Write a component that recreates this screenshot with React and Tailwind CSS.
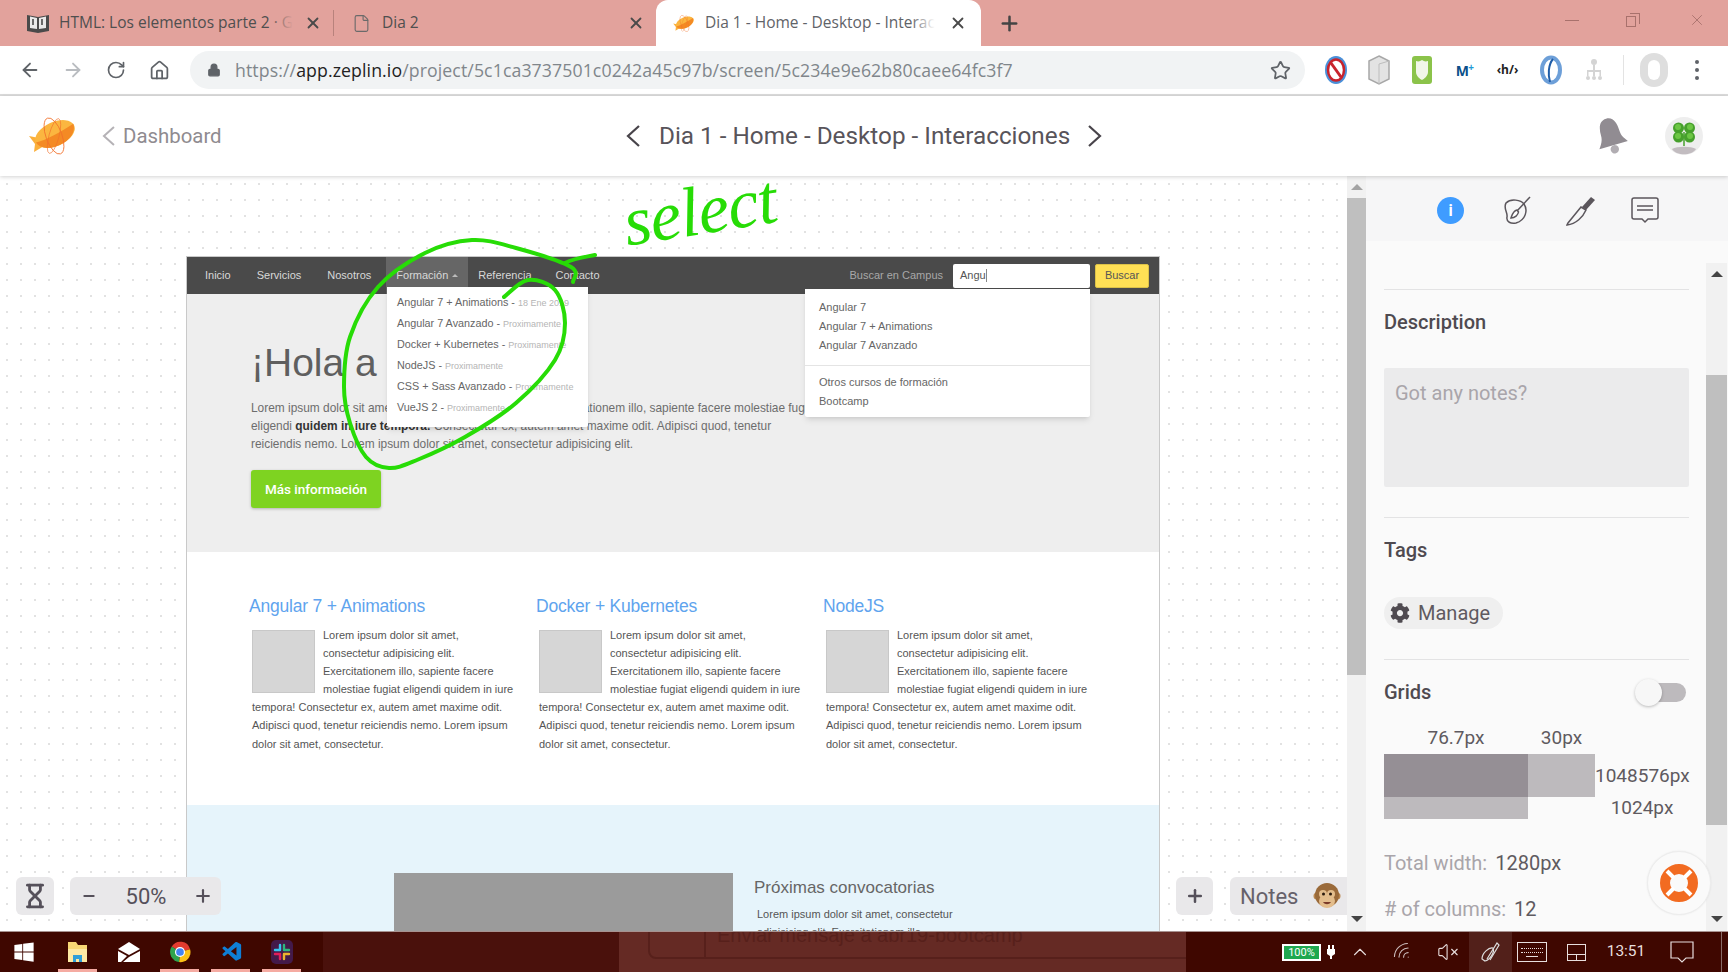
// App.jsx - Zeplin screen inside Chrome on Windows
import { ArrowLeft, ArrowRight, RotateCw, House, Lock, Star, X, Plus, Minus, File, Hourglass, ChevronUp, Wifi, VolumeX } from 'lucide-react'
import { FaCog, FaWindows } from 'react-icons/fa'
import { VscVscode } from 'react-icons/vsc'

const URL_HOST = 'app.zeplin.io'
const URL_PATH = '/project/5c1ca3737501c0242a45c97b/screen/5c234e9e62b80caee64fc3f7'

// smooth line through the points of the hand drawn circle
function smooth(points) {
    let d = `M${points[0][0]} ${points[0][1]}`
    for (let i = 0; i < points.length - 1; i++) {
        const p0 = points[i - 1] || points[i]
        const p1 = points[i]
        const p2 = points[i + 1]
        const p3 = points[i + 2] || p2
        d += ` C${p1[0] + (p2[0] - p0[0]) / 6} ${p1[1] + (p2[1] - p0[1]) / 6} ${p2[0] - (p3[0] - p1[0]) / 6} ${p2[1] - (p3[1] - p1[1]) / 6} ${p2[0]} ${p2[1]}`
    }
    return d
}

const CIRCLE = [[504, 297], [528, 280], [555, 290], [565, 323], [555, 360], [516, 403], [465, 437], [417, 460], [389, 468], [366, 457], [350, 423], [344, 387], [350, 337], [378, 287], [425, 253], [472, 240], [516, 248], [571, 267], [573, 282]]

function Zeppelin({ className }) {
    return (
        <svg className={className} viewBox="0 0 50 38">
            <path d="M12 21 L2 19 L8 27 L7 35 L17 29 Z" fill="#fbb03b" />
            <g transform="rotate(-24 28 17)">
                <ellipse cx="28" cy="17" rx="21" ry="12" fill="#fbb640" />
                <path d="M7 17 C16 19 36 17 49 15 C48 24 38 29 28 29 C16 29 8 24 7 17 Z" fill="#f48a24" />
            </g>
            <ellipse cx="27" cy="19" rx="8" ry="19" fill="none" stroke="#f2702a" strokeWidth="0.8" transform="rotate(-20 27 19)" />
            <ellipse cx="27" cy="19" rx="5" ry="18" fill="none" stroke="#f2702a" strokeWidth="0.6" transform="rotate(15 27 19)" />
        </svg>
    )
}

function BookIcon() {
    return (
        <svg className="w-[22px] h-[20px]" viewBox="0 0 22 20">
            <path d="M0 2 L11 4 L22 2 V18 L11 20 L0 18 Z" fill="#4a4a4a" />
            <path d="M3 3.5 L10 5 V16 L3 15 Z M12 5 L19 3.500 V15 L12 16 Z" fill="#e9e9e9" />
            <path d="M6 6 V12 M15 6 V12" stroke="#4a4a4a" strokeWidth="1.6" />
        </svg>
    )
}

function Chevron({ className, left }) {
    return (
        <svg className={className} viewBox="0 0 14 22" fill="none" stroke="currentColor" strokeWidth="2.200">
            <path d={left ? 'M13 1 L2 11 L13 21' : 'M1 1 L12 11 L1 21'} />
        </svg>
    )
}

function Tab({ children, icon, closeClass, width, active, fade }) {
    return (
        <div className={`relative flex items-center h-full ${width} ${active ? 'bg-white rounded-t-xl' : ''}`}>
            {icon}
            <div className={`relative overflow-hidden whitespace-nowrap flex-1 text-[15.5px] ${active ? 'text-[#5f6368]' : 'text-[#4f4f4f]'}`}>
                {children}
                {fade && <div className={`absolute right-0 top-0 bottom-0 w-6 bg-linear-to-r from-transparent ${active ? 'to-white' : 'to-[#e2a29c]'}`} />}
            </div>
            <X className={`w-[18px] h-[18px] text-[#4a4a4a] ${closeClass}`} strokeWidth={2.4} />
        </div>
    )
}

function TabBar() {
    return (
        <div className="flex items-center h-[46px] bg-[#e2a29c] shrink-0">
            <Tab width="w-[333px]" fade closeClass="ml-[11px] mr-[11px]" icon={<span className="ml-[27px] mr-[10px]"><BookIcon /></span>}>
                HTML: Los elementos parte 2 · GitHub
            </Tab>
            <div className="w-px h-[26px] bg-[#b8827c]" />
            <Tab width="w-[322px]" closeClass="mr-[11px]" icon={<File className="ml-[18px] mr-[11px] w-[19px] h-[23px] text-[#6a6a6a]" strokeWidth={1.4} />}>
                Dia 2
            </Tab>
            <Tab width="w-[325px]" active fade closeClass="mx-[14px]" icon={<span className="ml-[16px] mr-[10px]"><Zeppelin className="w-[23px] h-[17px]" /></span>}>
                Dia 1 - Home - Desktop - Interacciones
            </Tab>
            <Plus className="ml-[17px] w-[23px] h-[23px] text-[#444]" strokeWidth={2.6} />
            <div className="ml-auto flex items-center h-full pb-[6px] text-[#a8716c]">
                <div className="w-[14px] h-px bg-[#a8716c] mr-[47px]" />
                <div className="relative w-[14px] h-[14px] mr-[48px]">
                    <div className="absolute left-0 bottom-0 w-[10px] h-[11px] border border-[#a8716c]" />
                    <div className="absolute right-0 top-0 w-[10px] h-[11px] border-t border-r border-[#a8716c]" />
                </div>
                <X className="w-[18px] h-[18px] mr-[22px]" strokeWidth={1.2} />
            </div>
        </div>
    )
}

function Ext({ children, className = 'w-[43px]' }) {
    return <div className={`flex items-center justify-center h-full ${className}`}>{children}</div>
}

function Toolbar() {
    return (
        <div className="flex items-center h-[50px] border-b-2 border-[#dcdcdc] bg-white shrink-0">
            <div className="flex items-center w-[190px] pl-[19px]">
                <ArrowLeft className="w-[22px] h-[22px] text-[#5f6368] mr-[21px]" strokeWidth={2} />
                <ArrowRight className="w-[22px] h-[22px] text-[#b9bcc0] mr-[22px]" strokeWidth={2} />
                <RotateCw className="w-[20px] h-[20px] text-[#5f6368] mr-[23px]" strokeWidth={2} />
                <House className="w-[21px] h-[21px] text-[#5f6368]" strokeWidth={2} />
            </div>
            <div className="flex items-center w-[1115px] h-[38px] rounded-full bg-[#f1f3f4] pl-[17px] pr-[14px]">
                <Lock className="w-[14px] h-[14px] text-[#5f6368] mr-[14px]" fill="#5f6368" strokeWidth={2} />
                <div className="flex-1 whitespace-nowrap text-[17.7px] text-[#80868b] tracking-[0.1px]">
                    https://<span className="text-[#222]">{URL_HOST}</span>{URL_PATH}
                </div>
                <Star className="w-[21px] h-[21px] text-[#5f6368]" strokeWidth={2} />
            </div>
            <div className="flex items-center h-full ml-[9px]">
                <Ext>
                    <svg className="w-[22px] h-[28px]" viewBox="0 0 22 28">
                        <ellipse cx="11" cy="14" rx="11" ry="14" fill="#4a90d9" />
                        <ellipse cx="11" cy="14" rx="8" ry="10.500" fill="#fff" stroke="#c8232c" strokeWidth="2.500" />
                        <path d="M6 7 L16 21" stroke="#c8232c" strokeWidth="3" />
                    </svg>
                </Ext>
                <Ext>
                    <svg className="w-[22px] h-[30px]" viewBox="0 0 22 30">
                        <path d="M11 1 L21 6 V24 L11 29 L1 24 V6 Z" fill="#e3e3e3" stroke="#a8a8a8" strokeWidth="1.500" />
                        <path d="M11 9 L21 6 M11 9 V29" stroke="#bdbdbd" strokeWidth="1" fill="none" />
                    </svg>
                </Ext>
                <Ext>
                    <svg className="w-[20px] h-[28px]" viewBox="0 0 20 28">
                        <rect width="20" height="28" rx="3" fill="#8bc34a" />
                        <path d="M4 5 C7 6 8 5 10 4 C12 5 13 6 16 5 V16 C16 20 12 23 10 24 C8 23 4 20 4 16 Z" fill="#f1f6e8" />
                    </svg>
                </Ext>
                <Ext><span className="text-[14px] font-bold text-[#0b4f8a] tracking-tighter">M<sup className="text-[10px] text-[#1e9ad6]">+</sup></span></Ext>
                <Ext><span className="text-[12px] font-bold text-[#222]">‹h/›</span></Ext>
                <Ext>
                    <svg className="w-[22px] h-[30px]" viewBox="0 0 22 30">
                        <ellipse cx="11" cy="15" rx="9" ry="12.500" fill="none" stroke="#6d9fd8" strokeWidth="4" />
                        <path d="M13 4 C8 10 8 20 10 27" stroke="#1f5da8" strokeWidth="2" fill="none" />
                    </svg>
                </Ext>
                <Ext>
                    <svg className="w-[16px] h-[24px]" viewBox="0 0 16 24" fill="#d4d4d4">
                        <circle cx="8" cy="4" r="3" />
                        <path d="M7 7 H9 V12 H15 V18 H13.500 V14 H9 V18 H7 V14 H2.500 V18 H1 V12 H7 Z" />
                        <circle cx="2" cy="20" r="2" /><circle cx="8" cy="20" r="2" /><circle cx="14" cy="20" r="2" />
                    </svg>
                </Ext>
                <div className="w-px h-[30px] bg-[#e3e3e3] ml-[8px]" />
                <Ext className="w-[60px]">
                    <div className="w-[28px] h-[34px] rounded-full bg-[#dedede] flex items-center justify-center">
                        <div className="w-[12px] h-[20px] rounded-full bg-white" />
                    </div>
                </Ext>
                <Ext className="w-[26px]">
                    <div className="flex flex-col gap-[4px]">
                        <div className="w-[4px] h-[4px] rounded-full bg-[#5f6368]" />
                        <div className="w-[4px] h-[4px] rounded-full bg-[#5f6368]" />
                        <div className="w-[4px] h-[4px] rounded-full bg-[#5f6368]" />
                    </div>
                </Ext>
            </div>
        </div>
    )
}

function Clover({ className }) {
    return (
        <svg className={className} viewBox="0 0 38 38">
            <circle cx="19" cy="19" r="19" fill="#eeeeee" />
            <path d="M7 32 C12 29 26 29 31 32 C27 39 11 39 7 32 Z" fill="#c2bcc0" />
            <g fill="#46a02c">
                <circle cx="13.500" cy="11" r="5.500" /><circle cx="24.500" cy="11" r="5.500" />
                <circle cx="13.500" cy="20" r="5.500" /><circle cx="24.500" cy="20" r="5.500" />
            </g>
            <g fill="#6cc644">
                <circle cx="13" cy="10" r="3" /><circle cx="25" cy="10" r="3" />
                <circle cx="13" cy="19" r="3" /><circle cx="25" cy="19" r="3" />
            </g>
            <path d="M19 15 V29" stroke="#46a02c" strokeWidth="1.500" />
        </svg>
    )
}

function ZeplinHeader() {
    return (
        <div className="relative z-20 flex items-center h-[80px] bg-white shadow-[0_1px_4px_rgba(0,0,0,0.18)] shrink-0">
            <div className="flex items-center w-[626px] shrink-0 pl-[27px]">
                <Zeppelin className="w-[50px] h-[38px]" />
                <Chevron left className="ml-[25px] w-[13px] h-[20px] text-[#b5b2b6]" />
                <span className="ml-[8px] text-[20.4px] text-[#8f8b90]">Dashboard</span>
            </div>
            <Chevron left className="w-[14px] h-[22px] shrink-0 text-[#48444a]" />
            <span className="w-[448px] shrink-0 pl-[19px] text-[24.3px] text-[#58545a] whitespace-nowrap">Dia 1 - Home - Desktop - Interacciones</span>
            <Chevron className="w-[14px] h-[22px] shrink-0 text-[#48444a]" />
            <svg className="ml-[491px] w-[36px] h-[38px] shrink-0" viewBox="0 0 34 36">
                <g transform="rotate(-16 17 18)">
                    <path d="M17 1 C24 1 26 8 26 15 C26 21 29 24 31 27 H3 C5 24 8 21 8 15 C8 8 10 1 17 1 Z" fill="#918c92" />
                    <circle cx="17" cy="31" r="4" fill="#b1adb2" />
                </g>
            </svg>
            <Clover className="ml-[36px] w-[38px] h-[38px] shrink-0" />
        </div>
    )
}

function Suggest({ children }) {
    return <div className="h-[19px] leading-[19px]">{children}</div>
}

function CourseItem({ name, note }) {
    return (
        <div className="h-[21px] leading-[21px] whitespace-nowrap text-[10.8px] text-[#666]">
            {name} - <span className="text-[9px] text-[#b5b5b5]">{note}</span>
        </div>
    )
}

function NavItem({ children, active }) {
    return (
        <div className={`flex items-center h-full gap-1 ${active ? 'bg-[#666] px-[10px] ml-[2px] mr-[-3px]' : 'px-[13px]'}`}>
            {children}
            {active && <div className="w-0 h-0 border-x-[3px] border-x-transparent border-b-[3px] border-b-[#bbb]" />}
        </div>
    )
}

function Column({ title }) {
    return (
        <div className="w-[265px] mr-[22px] shrink-0">
            <h3 className="h-[24px] leading-[24px] text-[17.5px] text-[#5fa4ee] whitespace-nowrap tracking-[-0.2px] ml-[-3px]">{title}</h3>
            <div className="mt-[8px] text-[11px] leading-[18.100px] text-[#555]">
                <div className="float-left w-[63px] h-[63px] mt-[4px] mr-[8px] bg-[#d6d6d6] border border-[#c8c8c8]" />
                Lorem ipsum dolor sit amet, consectetur adipisicing elit. Exercitationem illo, sapiente facere molestiae fugiat eligendi quidem in iure tempora! Consectetur ex, autem amet maxime odit. Adipisci quod, tenetur reiciendis nemo. Lorem ipsum dolor sit amet, consectetur.
            </div>
        </div>
    )
}

function Artboard() {
    return (
        <div className="absolute left-[186px] top-[80px] w-[974px] h-[800px] border-x border-t border-[#c9c9c9] bg-white font-['Liberation_Sans',sans-serif]">
            <div className="flex items-center h-[37px] bg-[#4a4a4a] text-[11px] text-[#d8d8d8] pl-[5px]">
                <NavItem>Inicio</NavItem>
                <NavItem>Servicios</NavItem>
                <NavItem>Nosotros</NavItem>
                <NavItem active>Formación</NavItem>
                <NavItem>Referencia</NavItem>
                <NavItem><span className="ml-[-2px]">Contacto</span></NavItem>
                <div className="ml-auto flex items-center mr-[10px]">
                    <span className="text-[#a8a8a8] mr-[10px]">Buscar en Campus</span>
                    <div className="flex items-center w-[137px] h-[24px] rounded-[2px] bg-white px-[7px] text-[#555]">Angu<span className="w-px h-[13px] bg-[#888]" /></div>
                    <div className="flex items-center justify-center w-[54px] h-[24px] ml-[5px] rounded-[2px] bg-[#ffe055] border border-[#dcc248] text-[#555]">Buscar</div>
                </div>
            </div>

            <div className="h-[258px] bg-[#eeeeee] pl-[64px] pt-[46px]">
                <h1 className="h-[46px] leading-[46px] text-[39px] text-[#5f5f5f]">¡Hola a</h1>
                <p className="mt-[13px] text-[11.900px] leading-[18px] text-[#6d6d6d] whitespace-nowrap">
                    Lorem ipsum dolor sit amet, consectetur adipisicing elit. Exercitationem illo, sapiente facere molestiae fugiat<br />
                    eligendi <b className="text-[#333]">quidem in iure tempora!</b> Consectetur ex, autem amet maxime odit. Adipisci quod, tenetur<br />
                    reiciendis nemo. Lorem ipsum dolor sit amet, consectetur adipisicing elit.
                </p>
                <div className="flex items-center justify-center w-[130px] h-[38px] mt-[17px] rounded-[3px] bg-[#7ed321] text-white text-[13.500px] font-medium font-['Roboto',sans-serif] shadow-[0_1px_3px_rgba(0,0,0,0.25)]">Más información</div>
            </div>

            <div className="flex h-[253px] pl-[65px] pt-[42px] bg-white">
                <Column title="Angular 7 + Animations" />
                <Column title="Docker + Kubernetes" />
                <Column title="NodeJS" />
            </div>

            <div className="flex h-[300px] bg-[#e6f4fb] pl-[207px] pt-[68px]">
                <div className="w-[339px] h-[200px] bg-[#9b9b9b] shrink-0" />
                <div className="ml-[21px]">
                    <h4 className="mt-[2px] h-[26px] leading-[26px] text-[17px] text-[#666]">Próximas convocatorias</h4>
                    <p className="mt-[4px] ml-[3px] text-[11px] leading-[18px] text-[#555] whitespace-nowrap">
                        Lorem ipsum dolor sit amet, consectetur<br />adipisicing elit. Exercitationem illo
                    </p>
                </div>
            </div>

            {/* open menus */}
            <div className="absolute left-[200px] top-[30px] w-[201px] h-[140px] bg-white shadow-md rounded-b-[2px] pl-[10px] pt-[5px]">
                <CourseItem name="Angular 7 + Animations" note="18 Ene 2019" />
                <CourseItem name="Angular 7 Avanzado" note="Proximamente" />
                <CourseItem name="Docker + Kubernetes" note="Proximamente" />
                <CourseItem name="NodeJS" note="Proximamente" />
                <CourseItem name="CSS + Sass Avanzado" note="Proximamente" />
                <CourseItem name="VueJS 2" note="Proximamente" />
            </div>
            <div className="absolute left-[618px] top-[32px] w-[285px] h-[128px] bg-white shadow-md rounded-b-[2px] text-[11px] text-[#666]">
                <div className="pl-[14px] pt-[9px] border-b border-[#e4e4e4] h-[77px]">
                    <Suggest>Angular 7</Suggest>
                    <Suggest>Angular 7 + Animations</Suggest>
                    <Suggest>Angular 7 Avanzado</Suggest>
                </div>
                <div className="pl-[14px] pt-[7px]">
                    <Suggest>Otros cursos de formación</Suggest>
                    <Suggest>Bootcamp</Suggest>
                </div>
            </div>
        </div>
    )
}

function Monkey() {
    return (
        <svg className="w-[28px] h-[28px]" viewBox="0 0 28 28">
            <circle cx="4" cy="14" r="3.500" fill="#b8864f" />
            <circle cx="24" cy="14" r="3.500" fill="#b8864f" />
            <circle cx="14" cy="13" r="12" fill="#9a6a3a" />
            <ellipse cx="14" cy="19" rx="8" ry="7" fill="#e3bd8c" />
            <ellipse cx="10" cy="12" rx="4" ry="4" fill="#e3bd8c" />
            <ellipse cx="18" cy="12" rx="4" ry="4" fill="#e3bd8c" />
            <circle cx="10.500" cy="12" r="1.500" fill="#2a1a0e" />
            <circle cx="17.500" cy="12" r="1.500" fill="#2a1a0e" />
            <path d="M10 20 C12 23 16 23 18 20 Z" fill="#7a3b2a" />
        </svg>
    )
}

function Canvas() {
    return (
        <div className="relative w-[1347px] h-full overflow-hidden bg-white bg-[radial-gradient(#e2e2e2_0.8px,transparent_1px)] bg-[length:14px_16px]">
            <Artboard />

            {/* green annotation over the artboard */}
            <svg className="absolute left-0 top-0 w-[1347px] h-[755px] pointer-events-none" viewBox="0 176 1347 755" fill="none" stroke="#27dc06" strokeWidth="4" strokeLinecap="round">
                <path d={smooth(CIRCLE)} />
                <path d="M565 263 C575 258 585 257 595 255" />
            </svg>
            <div className="absolute left-[623px] top-[-5px] -rotate-[9deg] text-[70px] leading-[80px] italic text-[#27dc06] font-['Liberation_Serif',serif] tracking-[-1px] pointer-events-none">select</div>

            {/* floating controls */}
            <div className="absolute left-[16px] top-[701px] flex items-center justify-center w-[38px] h-[38px] rounded-md bg-[#e9e8ea]">
                <Hourglass className="w-[26px] h-[28px] text-[#55505a]" strokeWidth={2.6} />
            </div>
            <div className="absolute left-[70px] top-[701px] flex items-center w-[151px] h-[38px] rounded-md bg-[#e9e8ea] text-[#55505a] pl-[11px]">
                <Minus className="w-[16px] h-[16px]" strokeWidth={3} />
                <span className="w-[98px] text-center text-[22px]">50%</span>
                <Plus className="w-[20px] h-[20px] ml-[-2px]" strokeWidth={2.6} />
            </div>
            <div className="absolute left-[1176px] top-[701px] flex items-center justify-center w-[37px] h-[38px] rounded-md bg-[#e9e8ea]">
                <Plus className="w-[20px] h-[20px] text-[#55505a]" strokeWidth={3} />
            </div>
            <div className="absolute left-[1230px] top-[701px] flex items-center w-[122px] h-[38px] rounded-md bg-[#e9e8ea] pl-[10px] text-[22px] text-[#66616a]">
                Notes
                <span className="ml-[15px]"><Monkey /></span>
            </div>
        </div>
    )
}

function Scrollbar({ className, thumb, light }) {
    return (
        <div className={`flex flex-col items-center bg-[#f1f1f1] ${className}`}>
            <div className={`shrink-0 mt-[8px] w-0 h-0 border-x-[6px] border-x-transparent border-b-[6px] ${light ? 'border-b-[#a3a3a3]' : 'border-b-[#444]'}`} />
            <div className={`w-full bg-[#bfbfbf] ${thumb}`} />
            <div className="mt-auto mb-[9px] w-0 h-0 border-x-[6px] border-x-transparent border-t-[6px] border-t-[#444]" />
        </div>
    )
}

function PanelTabs() {
    return (
        <div className="flex items-center h-[65px] bg-[#f6f6f7] pl-[71px] pt-[4px] shrink-0">
            <div className="flex items-center justify-center w-[27px] h-[27px] rounded-full bg-[#3f9cff] text-white text-[16px] font-bold">i</div>
            <svg className="ml-[37px] w-[30px] h-[29px]" viewBox="0 0 30 29" fill="none" stroke="#5b565c" strokeWidth="1.500">
                <path d="M5 7 C10 2 20 4 23 8 C27 14 25 24 15 27 C10 28 5 26 6 21 C7 17 2 12 5 7 Z" />
                <path d="M29 1 L15 16" />
                <path d="M16 14 C12 15 11 19 10 22 C14 22 17 19 17.500 16 Z" fill="#fff" />
            </svg>
            <svg className="ml-[35px] w-[30px] h-[30px]" viewBox="0 0 30 30">
                <path d="M1 29 C10 28 17 21 20 14 L15 11 L2 27 Z" fill="none" stroke="#5b565c" strokeWidth="1.500" />
                <path d="M16 11 L25 1 L29 4 L20 14 Z" fill="#5b565c" />
            </svg>
            <svg className="ml-[35px] w-[28px] h-[27px]" viewBox="0 0 28 27" fill="none" stroke="#5b565c" strokeWidth="1.500">
                <path d="M3 1 H25 C26 1 27 2 27 3 V20 C27 21 26 22 25 22 H17 L14 25 L11 22 H3 C2 22 1 21 1 20 V3 C1 2 2 1 3 1 Z" />
                <path d="M6 9 H22 M6 13 H22" />
            </svg>
        </div>
    )
}

function Divider({ className }) {
    return <div className={`h-px bg-[#e3e3e4] w-[305px] ${className}`} />
}

function Heading({ children, className }) {
    return <h2 className={`h-[28px] leading-[28px] text-[20px] font-medium text-[#4f4a50] ${className}`}>{children}</h2>
}

function RightPanel() {
    return (
        <div className="relative flex flex-col w-[362px] h-full bg-[#fafafa]">
            <PanelTabs />
            <div className="flex flex-1 min-h-0">
                <div className="w-[340px] pl-[18px] overflow-hidden">
                    <Divider className="mt-[48px]" />
                    <Heading className="mt-[18px]">Description</Heading>
                    <div className="mt-[32px] w-[305px] h-[119px] rounded-[2px] bg-[#ebebec] pl-[11px] pt-[11px] text-[20px] leading-[28px] text-[#a9a5aa]">Got any notes?</div>
                    <Divider className="mt-[30px]" />
                    <Heading className="mt-[18px]">Tags</Heading>
                    <div className="flex items-center mt-[33px] w-[119px] h-[32px] rounded-full bg-[#efefef] pl-[6px] text-[20px] text-[#5f5a60]">
                        <FaCog className="w-[20px] h-[20px] text-[#4f4a50]" />
                        <span className="ml-[8px]">Manage</span>
                    </div>
                    <Divider className="mt-[30px]" />
                    <div className="flex items-center justify-between mt-[18px] w-[305px]">
                        <Heading>Grids</Heading>
                        <div className="relative w-[36px] h-[19px] mr-[3px] rounded-full bg-[#bdbabd]">
                            <div className="absolute left-[-15px] top-[-4px] w-[27px] h-[27px] rounded-full bg-[#f7f7f7] shadow-[0_1px_3px_rgba(0,0,0,0.25)]" />
                        </div>
                    </div>
                    <div className="grid grid-cols-[144px_67px_94px] grid-rows-[28px_43px_22px] mt-[20px] text-[19px] text-[#5f5a60] w-[305px]">
                        <div className="text-center leading-[24px]">76.7px</div>
                        <div className="text-center leading-[24px]">30px</div>
                        <div />
                        <div className="bg-[#958f95]" />
                        <div className="bg-[#bdbabd]" />
                        <div className="text-center leading-[43px] whitespace-nowrap">1048576px</div>
                        <div className="bg-[#bdbabd]" />
                        <div />
                        <div className="text-center leading-[22px]">1024px</div>
                    </div>
                    <div className="mt-[30px] h-[28px] leading-[28px] text-[20px] text-[#a9a5aa]">Total width:<span className="ml-[8px] text-[#5f5a60]">1280px</span></div>
                    <div className="mt-[18px] h-[28px] leading-[28px] text-[20px] text-[#a9a5aa]">
                        # of columns:<span className="ml-[8px] text-[#5f5a60]">12</span>
                    </div>
                </div>
                <Scrollbar className="w-[21px] mt-[22px]" thumb="mt-[98px] h-[450px]" />
            </div>

            <div className="absolute left-[281px] top-[675px] flex items-center justify-center w-[64px] h-[64px] rounded-full bg-[#fafafa] border border-[#ededed] shadow-[0_0_2px_rgba(0,0,0,0.08)]">
                <svg className="w-[38px] h-[38px]" viewBox="0 0 38 38">
                    <circle cx="19" cy="19" r="14" fill="none" stroke="#f26b21" strokeWidth="10" />
                    <path d="M7 7 L14 14 M31 7 L24 14 M7 31 L14 24 M31 31 L24 24" stroke="#fff" strokeWidth="4" />
                </svg>
            </div>
        </div>
    )
}

function TaskApp({ children, underline = true }) {
    return (
        <div className="relative flex items-center justify-center w-[39px] h-full">
            {children}
            {underline && <div className="absolute left-0 right-0 bottom-0 h-[3px] bg-[#f5aba2]" />}
        </div>
    )
}

function Tray({ children, className }) {
    return <div className={`flex items-center justify-center h-full ${className}`}>{children}</div>
}

function Taskbar() {
    return (
        <div className="relative z-20 flex items-center h-[41px] bg-[#3f0700] border-t border-[#a89290] shrink-0 text-[#e8dedd]">
            <div className="flex items-center justify-center w-[48px] h-full">
                <FaWindows className="w-[22px] h-[22px] text-white" />
            </div>
            <div className="flex items-center gap-[12px] h-full ml-[10px]">
                <TaskApp>
                    <svg className="w-[21px] h-[22px]" viewBox="0 0 21 22">
                        <path d="M1 1 H9 L11 4 H20 V21 H1 Z" fill="#f8d775" />
                        <path d="M1 8 H20 V21 H1 Z" fill="#fde9a4" />
                        <path d="M6 21 V14 H15 V21 H12 V18 H9 V21 Z" fill="#2f9fd8" />
                    </svg>
                </TaskApp>
                <TaskApp underline={false}>
                    <svg className="w-[22px] h-[20px]" viewBox="0 0 22 20" fill="#fff">
                        <path d="M11 0 L22 7 L11 13 L0 7 Z" />
                        <path d="M0 9 L9 14 L3 20 H0 Z M22 9 V20 H5 L11 15 Z" />
                    </svg>
                </TaskApp>
                <TaskApp>
                    <svg className="w-[22px] h-[24px]" viewBox="0 0 24 24">
                        <path d="M12 12 L3 6 A11 11 0 0 1 23 9 Z" fill="#e33b2e" />
                        <path d="M12 12 L23 9 A11 11 0 0 1 11 23 Z" fill="#fbc116" />
                        <path d="M12 12 L11 23 A11 11 0 0 1 3 6 Z" fill="#2ea44f" />
                        <circle cx="12" cy="12" r="5.500" fill="#fff" />
                        <circle cx="12" cy="12" r="4.200" fill="#4285f4" />
                    </svg>
                </TaskApp>
                <TaskApp>
                    <VscVscode className="ml-[3px] w-[23px] h-[24px] text-[#0f7fd6]" />
                </TaskApp>
                <TaskApp>
                    <svg className="w-[22px] h-[24px]" viewBox="0 0 22 24">
                        <rect width="22" height="24" rx="5" fill="#431a4a" />
                        <path d="M9 5 V10 M4 10 H9" stroke="#36c5f0" strokeWidth="2.400" strokeLinecap="round" />
                        <path d="M13 5 V10 M13 10 H18" stroke="#2eb67d" strokeWidth="2.400" strokeLinecap="round" />
                        <path d="M13 19 V14 M18 14 H13" stroke="#ecb22e" strokeWidth="2.400" strokeLinecap="round" />
                        <path d="M9 19 V14 M4 14 H9" stroke="#e01e5a" strokeWidth="2.400" strokeLinecap="round" />
                    </svg>
                </TaskApp>
            </div>
            <div className="ml-[22px] w-[296px] h-full bg-[#4a110c]" />
            <div className="relative w-[567px] h-full overflow-hidden bg-[#652a24]">
                {/* chat input of the window behind shows through the taskbar */}
                <div className="absolute left-[29px] top-[-30px] flex items-center w-[600px] h-[57px] rounded-lg border-2 border-[#57201b] font-['Liberation_Sans',sans-serif]">
                    <div className="w-[56px] h-full border-r-2 border-[#57201b]" />
                    <span className="ml-[11px] mt-[8px] text-[20px] text-[#57201b] whitespace-nowrap">Enviar mensaje a abr19-bootcamp</span>
                </div>
            </div>
            <div className="flex items-center h-full ml-[96px]">
                <div className="flex items-center justify-center w-[39px] h-[17px] bg-[#1fa84f] border-2 border-white text-[11px] leading-none text-white">100%</div>
                <Tray className="w-[20px]">
                    <svg className="w-[8px] h-[14px]" viewBox="0 0 8 14" fill="#fff">
                        <path d="M1 0 H3 V4 H5 V0 H7 V4 H8 V9 L5 11 V14 H3 V11 L0 9 V4 H1 Z" />
                    </svg>
                </Tray>
                <Tray className="w-[38px]"><ChevronUp className="w-[22px] h-[22px]" strokeWidth={1.2} /></Tray>
                <Tray className="w-[48px]"><Wifi className="w-[22px] h-[22px] -rotate-45 text-[#cbbcbb]" strokeWidth={1.2} /></Tray>
                <Tray className="w-[42px]"><VolumeX className="w-[22px] h-[22px]" strokeWidth={1.2} /></Tray>
                <Tray className="w-[43px] bg-[#52201a]">
                    <svg className="w-[20px] h-[22px]" viewBox="0 0 20 22" fill="none" stroke="#ddd" strokeWidth="1.200">
                        <path d="M1 18 C1 12 8 6 12 7 C14 11 9 19 4 20 Z" />
                        <path d="M6 18 L16 2 L18 4 L9 19" />
                    </svg>
                </Tray>
                <Tray className="w-[40px]">
                    <div className="flex flex-col justify-center gap-[3px] w-[30px] h-[20px] border border-[#e8dedd] px-[3px]">
                        <div className="border-t border-dotted border-[#e8dedd]" />
                        <div className="border-t border-dotted border-[#e8dedd]" />
                        <div className="border-t border-[#e8dedd] mx-[5px]" />
                    </div>
                </Tray>
                <Tray className="w-[48px]">
                    <div className="relative w-[19px] h-[17px] border border-[#e8dedd]">
                        <div className="absolute left-0 right-0 bottom-[5px] border-t border-[#e8dedd]" />
                        <div className="absolute left-[8px] bottom-0 h-[5px] border-l border-[#e8dedd]" />
                    </div>
                </Tray>
                <Tray className="w-[52px] text-[15.500px]">13:51</Tray>
                <Tray className="w-[60px]">
                    <svg className="w-[24px] h-[24px]" viewBox="0 0 24 24" fill="none" stroke="#e8dedd" strokeWidth="1.200">
                        <path d="M1 2 H23 V18 H16 L12 22 L8 18 H1 Z" />
                    </svg>
                </Tray>
                <div className="ml-[9px] w-px h-full bg-[#8a6a66]" />
            </div>
        </div>
    )
}

export default function App() {
    return (
        <div className="flex flex-col w-[1728px] h-[972px] overflow-hidden bg-white font-['Roboto',sans-serif]">
            <div className="font-['Open_Sans',sans-serif]">
                <TabBar />
                <Toolbar />
            </div>
            <ZeplinHeader />
            <div className="flex flex-1 min-h-0">
                <Canvas />
                <Scrollbar className="w-[19px]" light thumb="mt-[8px] h-[477px]" />
                <RightPanel />
            </div>
            <Taskbar />
        </div>
    )
}
